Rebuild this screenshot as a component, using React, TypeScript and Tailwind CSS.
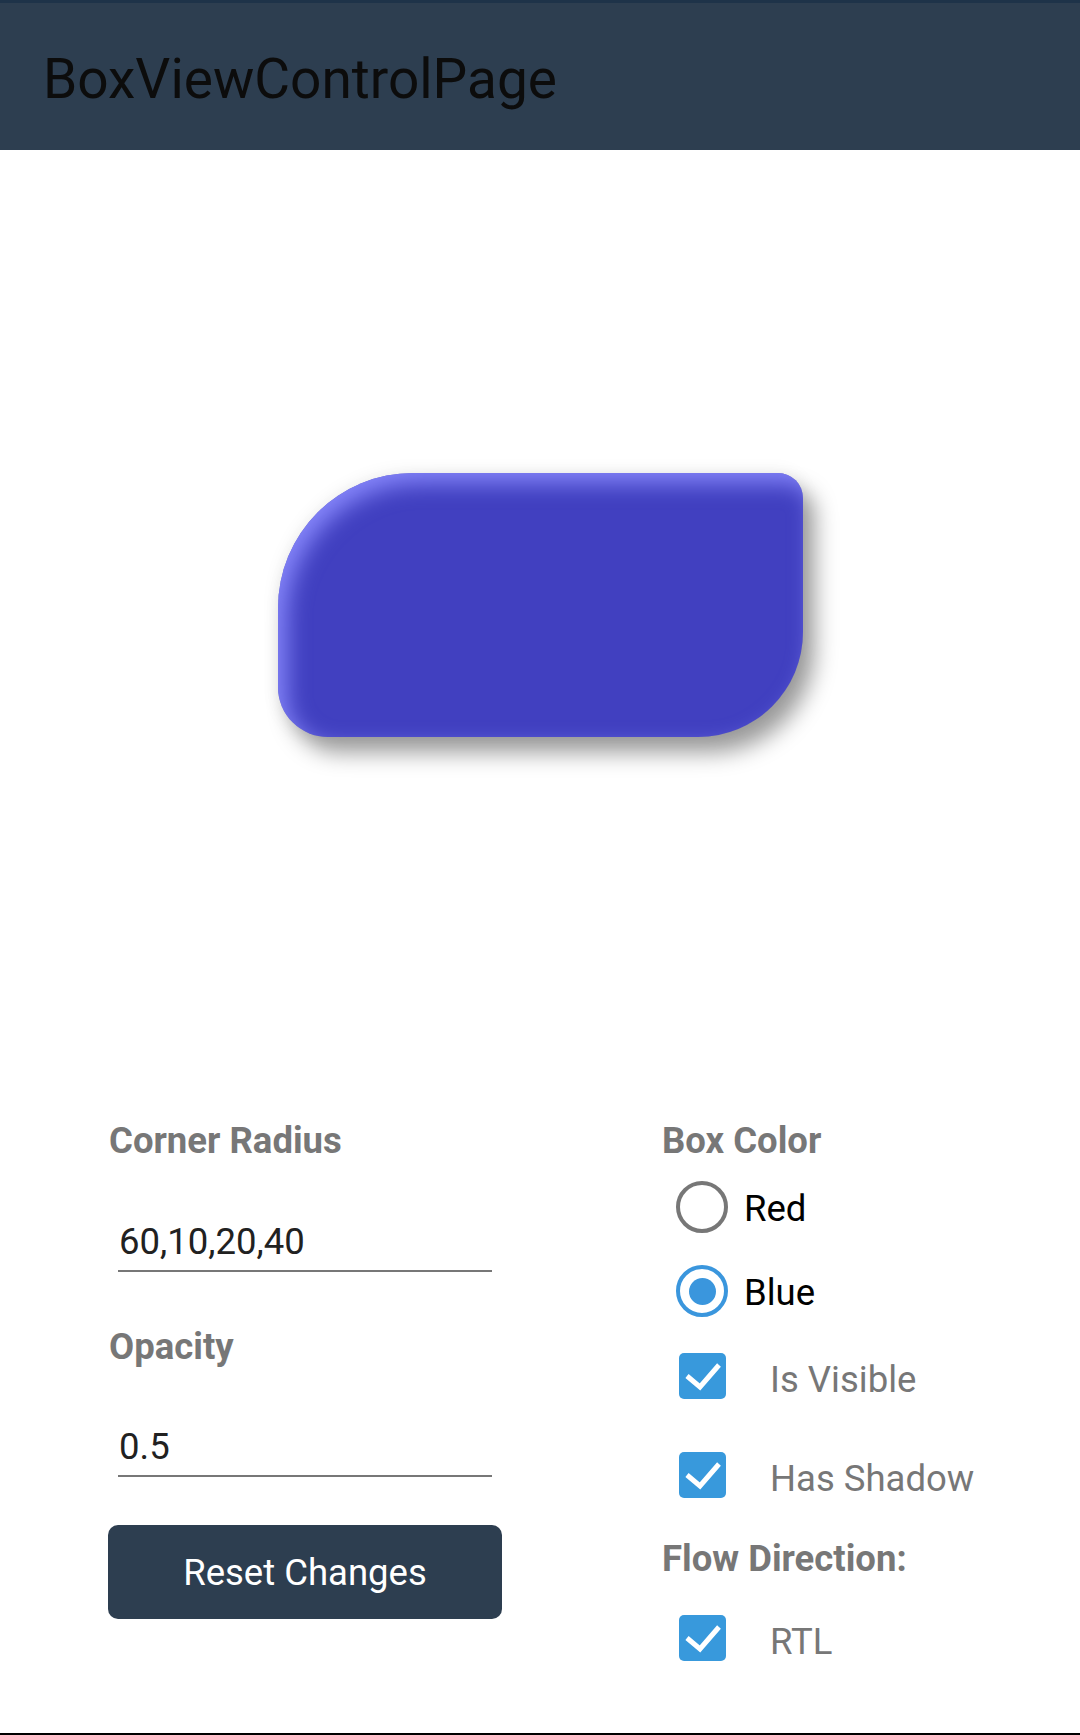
import React from "react";

const FONT = { fontFamily: "Roboto, 'Noto Sans', sans-serif" };

function Radio({ label, checked }: { label: string; checked?: boolean }) {
  return (
    <div className="flex h-[52px] items-center">
      <div
        className={
          checked
            ? "ml-[14px] flex h-[52px] w-[52px] items-center justify-center rounded-full border-[4px] border-[#3a96dd]"
            : "ml-[14px] h-[52px] w-[52px] rounded-full border-[4px] border-[#777777]"
        }
      >
        {checked && <div className="h-[27px] w-[27px] rounded-full bg-[#3a96dd]" />}
      </div>
      <span className="ml-[16px] pt-[3px] text-[36.5px] leading-[43px] text-black">{label}</span>
    </div>
  );
}

function Check({ label }: { label: string }) {
  return (
    <div className="flex h-[46px] items-center">
      <div className="ml-[17px] flex h-[46px] w-[47px] items-center justify-center rounded-[5px] bg-[#3899dc]">
        <svg viewBox="0 0 46 46" className="h-[46px] w-[46px]">
          <path d="M7 23 L20 34 L39 12" fill="none" stroke="white" strokeWidth="5" />
        </svg>
      </div>
      <span className="ml-[44px] pt-[7px] text-[36.5px] leading-[43px] text-[#777777]">{label}</span>
    </div>
  );
}

function Entry({ value }: { value: string }) {
  return (
    <div className="ml-[10px] w-[374px] border-b-2 border-[#777777] pb-[7px]">
      <div className="pl-[1px] text-[36.5px] leading-[43px] text-[#212121]">{value}</div>
    </div>
  );
}

export default function App() {
  return (
    <div className="relative h-[1735px] w-[1080px] overflow-hidden bg-white" style={FONT}>
      {/* toolbar */}
      <header className="flex h-[150px] items-center border-t-[3px] border-[#1e3349] bg-[#2d3e50] pl-[43px] pt-[4px]">
        <h1 className="text-[55px] font-normal leading-[64px] text-[#0c0c0c]">BoxViewControlPage</h1>
      </header>

      {/* preview */}
      <section className="flex h-[910px] items-center justify-center">
        <div className="h-[264px] w-[525px] rounded-tl-[135px] rounded-tr-[25px] rounded-br-[105px] rounded-bl-[50px] bg-[#4140c0] shadow-[inset_9px_10px_22px_rgba(140,140,255,0.9),12px_16px_22px_rgba(0,0,0,0.38),0_0_18px_rgba(0,0,0,0.08)]" />
      </section>

      {/* controls */}
      <section className="grid grid-cols-[394px_1fr] gap-x-[160px] pl-[108px] pt-[59px]">
        <div className="flex flex-col">
          <div className="pl-[1px] text-[36.5px] font-bold leading-[43px] text-[#777777]">Corner Radius</div>
          <div className="mt-[58px]">
            <Entry value="60,10,20,40" />
          </div>
          <div className="mt-[53px] pl-[1px] text-[36.5px] font-bold leading-[43px] text-[#777777]">Opacity</div>
          <div className="mt-[57px]">
            <Entry value="0.5" />
          </div>
          <button className="mt-[48px] h-[94px] w-[394px] rounded-[10px] bg-[#2d3e50] text-[36.5px] leading-[43px] text-white">
            Reset Changes
          </button>
        </div>

        <div className="flex flex-col">
          <div className="text-[36.5px] font-bold leading-[43px] text-[#777777]">Box Color</div>
          <div className="mt-[19px]">
            <Radio label="Red" />
          </div>
          <div className="mt-[32px]">
            <Radio label="Blue" checked />
          </div>
          <div className="mt-[36px]">
            <Check label="Is Visible" />
          </div>
          <div className="mt-[53px]">
            <Check label="Has Shadow" />
          </div>
          <div className="mt-[39px] text-[36.5px] font-bold leading-[43px] text-[#777777]">Flow Direction:</div>
          <div className="mt-[35px]">
            <Check label="RTL" />
          </div>
        </div>
      </section>

      <div className="absolute bottom-0 left-0 h-[2px] w-full bg-black" />
    </div>
  );
}
